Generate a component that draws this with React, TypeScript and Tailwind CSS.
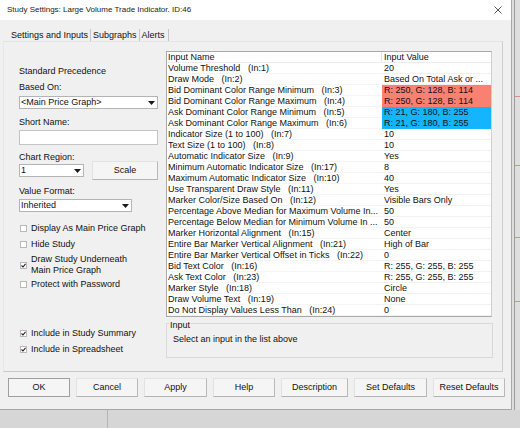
import React from "react";

const rows: [string, string, string?][] = [
  ["Volume Threshold   (In:1)", "20"],
  ["Draw Mode   (In:2)", "Based On Total Ask or ..."],
  ["Bid Dominant Color Range Minimum   (In:3)", "R: 250, G: 128, B: 114", "red"],
  ["Bid Dominant Color Range Maximum   (In:4)", "R: 250, G: 128, B: 114", "red"],
  ["Ask Dominant Color Range Minimum   (In:5)", "R: 21, G: 180, B: 255", "blue"],
  ["Ask Dominant Color Range Maximum   (In:6)", "R: 21, G: 180, B: 255", "blue"],
  ["Indicator Size (1 to 100)   (In:7)", "10"],
  ["Text Size (1 to 100)   (In:8)", "10"],
  ["Automatic Indicator Size   (In:9)", "Yes"],
  ["Minimum Automatic Indicator Size   (In:17)", "8"],
  ["Maximum Automatic Indicator Size   (In:10)", "40"],
  ["Use Transparent Draw Style   (In:11)", "Yes"],
  ["Marker Color/Size Based On   (In:12)", "Visible Bars Only"],
  ["Percentage Above Median for Maximum Volume In...", "50"],
  ["Percentage Below Median for Minimum Volume In ...", "50"],
  ["Marker Horizontal Alignment   (In:15)", "Center"],
  ["Entire Bar Marker Vertical Alignment   (In:21)", "High of Bar"],
  ["Entire Bar Marker Vertical Offset in Ticks   (In:22)", "0"],
  ["Bid Text Color   (In:16)", "R: 255, G: 255, B: 255"],
  ["Ask Text Color   (In:23)", "R: 255, G: 255, B: 255"],
  ["Marker Style   (In:18)", "Circle"],
  ["Draw Volume Text   (In:19)", "None"],
  ["Do Not Display Values Less Than   (In:24)", "0"],
];

function Arrow() {
  return (
    <svg width="7" height="4" viewBox="0 0 7 4">
      <path d="M0 0H7L3.5 4Z" fill="#1a1a1a" />
    </svg>
  );
}

function Select({ className, text }: { className: string; text: string }) {
  return (
    <div className={"h-[13px] border border-[#b4b4b4] bg-white flex items-center " + className}>
      <span className="flex-1 pl-[1px] leading-[11px] whitespace-nowrap overflow-hidden">{text}</span>
      <span className="w-[12px] h-full flex items-center justify-center">
        <Arrow />
      </span>
    </div>
  );
}

function Check({ checked, children, className = "" }: { checked?: boolean; children: React.ReactNode; className?: string }) {
  return (
    <div className={"flex items-center " + className}>
      <span className="ml-[1px] w-[7px] h-[7px] border border-[#b9b9b9] bg-white flex items-center justify-center shrink-0">
        {checked && (
          <svg width="5" height="5" viewBox="0 0 5 5">
            <path d="M0.5 2.5L2 4L4.5 0.8" stroke="#222" strokeWidth="1.1" fill="none" />
          </svg>
        )}
      </span>
      <span className="ml-[4px] leading-[11px]">{children}</span>
    </div>
  );
}

function Btn({ className, children, def }: { className: string; children: React.ReactNode; def?: boolean }) {
  return (
    <div
      className={
        "h-[19px] flex items-center justify-center bg-[#f5f5f5] border " +
        (def
          ? "border-[#9f9f9f] "
          : "border-t-[#e2e2e2] border-l-[#e2e2e2] border-r-[#b9b9b9] border-b-[#b3b3b3] ") +
        className
      }
    >
      {children}
    </div>
  );
}

export default function App() {
  return (
    <div className="w-[520px] h-[428px] bg-[#d8d8d8] flex flex-col overflow-hidden font-['Liberation_Sans',Arial,sans-serif] text-[9px] leading-[11px] text-[#111]">
      <div className="flex h-[410px] shrink-0">
        <div className="w-[512px] h-[410px] bg-[#f0f0f0] flex flex-col border-r border-b border-[#a8a8a8] shadow-[1px_1px_3px_rgba(0,0,0,0.25)] shrink-0">
          {/* Title bar */}
          <div className="h-[20px] bg-white flex items-center justify-between pl-[7px] pr-[9px] shrink-0">
            <span className="text-[8px] leading-[10px] text-[#222]">Study Settings: Large Volume Trade Indicator. ID:46</span>
            <svg width="8" height="8" viewBox="0 0 8 8">
              <path d="M0.5 0.5L7.5 7.5M7.5 0.5L0.5 7.5" stroke="#444" strokeWidth="0.9" />
            </svg>
          </div>
          {/* Tabs */}
          <div className="h-[12px] mt-[9px] pl-[11px] flex items-center gap-[2px] shrink-0">
            <span>Settings and Inputs</span>
            <span className="w-px h-[12px] bg-[#c4c4c4]" />
            <span>Subgraphs</span>
            <span className="w-px h-[12px] bg-[#c4c4c4]" />
            <span>Alerts</span>
            <span className="w-px h-[12px] bg-[#c4c4c4] ml-[1px]" />
          </div>
          {/* Panel */}
          <div className="ml-[3px] w-[500px] h-[331px] border border-t-[#e4e4e4] border-l-[#e8e8e8] border-r-[#cdcdcd] border-b-[#c9c9c9] flex shrink-0">
            {/* left column */}
            <div className="w-[139px] ml-[15px] pt-[24px] flex flex-col shrink-0">
              <div>Standard Precedence</div>
              <div className="mt-[5px]">Based On:</div>
              <Select className="mt-[3px] w-[139px]" text="<Main Price Graph>" />
              <div className="mt-[8px]">Short Name:</div>
              <div className="mt-[2px] h-[15px] w-[139px] border border-[#c4c4c4] bg-white" />
              <div className="mt-[7px]">Chart Region:</div>
              <div className="mt-[-2px] h-[19px] flex items-center">
                <Select className="w-[65px]" text="1" />
                <Btn className="ml-[8px] w-[66px]">Scale</Btn>
              </div>
              <div className="mt-[6px]">Value Format:</div>
              <Select className="mt-[2px] w-[113px]" text="Inherited" />
              <Check className="mt-[11px]">Display As Main Price Graph</Check>
              <Check className="mt-[5px]">Hide Study</Check>
              <Check className="mt-[4px]" checked>
                Draw Study Underneath
                <br />
                Main Price Graph
              </Check>
              <Check className="mt-[3px]">Protect with Password</Check>
              <Check className="mt-[38px]" checked>Include in Study Summary</Check>
              <Check className="mt-[5px]" checked>Include in Spreadsheet</Check>
            </div>
            {/* right column */}
            <div className="ml-[8px] pt-[9px] flex flex-col">
              <div className="w-[326px] h-[266px] border border-[#a9a9a9] border-r-[#d0d0d0] bg-white flex flex-col">
                <div className="h-[11px] flex border-b border-[#ececec] shrink-0">
                  <div className="w-[215px] pl-[1px] border-r border-[#e6e6e6]">Input Name</div>
                  <div className="flex-1 pl-[2px]">Input Value</div>
                </div>
                {rows.map(([n, v, c], i) => (
                  <div key={i} className="h-[11px] flex shrink-0">
                    <div className="w-[215px] pl-[1px] whitespace-pre overflow-hidden border-b border-[#f5f5f5]">{n}</div>
                    <div
                      className={
                        "flex-1 pl-[2px] whitespace-pre overflow-hidden " +
                        (c === "red" ? "bg-[#fa8072]" : c === "blue" ? "bg-[#15b4ff]" : "border-b border-[#f1f1f1]")
                      }
                    >
                      {v}
                    </div>
                  </div>
                ))}
              </div>
              <div className="mt-[6px] w-[327px] h-[35px] border border-[#d9d9d9] flex flex-col">
                <div className="mt-[-4px] ml-[2px] px-[1px] w-fit bg-[#f0f0f0]">Input</div>
                <div className="mt-[3px] ml-[6px]">Select an input in the list above</div>
              </div>
            </div>
          </div>
          {/* Buttons */}
          <div className="mt-[6px] pl-[8px] flex gap-[6px] shrink-0">
            <Btn className="w-[62px]" def>OK</Btn>
            <Btn className="w-[62px]">Cancel</Btn>
            <Btn className="w-[63px]">Apply</Btn>
            <Btn className="w-[62px]">Help</Btn>
            <Btn className="w-[67px]">Description</Btn>
            <Btn className="w-[73px]">Set Defaults</Btn>
            <Btn className="w-[72px]">Reset Defaults</Btn>
          </div>
        </div>
        {/* chart strip on right */}
        <svg width="8" height="410" viewBox="0 0 8 410" className="shrink-0">
          <rect width="8" height="410" fill="#dedede" />
          <rect x="2" y="0" width="1" height="410" fill="#9c9c9c" />
          <rect x="3" y="96" width="5" height="1" fill="#e08a8a" />
          <rect x="3" y="165" width="5" height="1" fill="#e08a8a" />
          <rect x="3" y="237" width="5" height="1" fill="#e08a8a" />
          <rect x="3" y="301" width="5" height="1" fill="#e08a8a" />
        </svg>
      </div>
      <svg width="520" height="18" viewBox="0 0 520 18" className="shrink-0">
        <rect width="520" height="18" fill="#d6d6d6" />
        <rect x="107" y="0" width="1" height="18" fill="#b4b4b4" />
      </svg>
    </div>
  );
}
